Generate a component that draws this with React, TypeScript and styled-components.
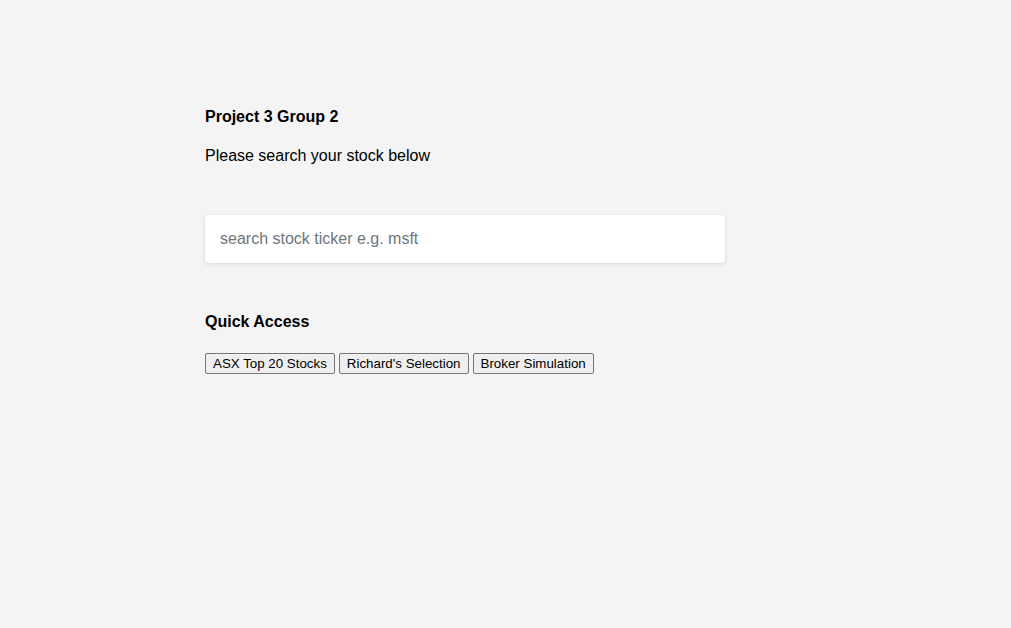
import React from "react";
import styled, { createGlobalStyle } from "styled-components";

const Global = createGlobalStyle`
  html, body { margin: 0; padding: 0; background: #f4f4f4; }
  body { font-family: "Liberation Sans", Arial, sans-serif; color: #000; }
`;

const Page = styled.main`
  display: flex;
  flex-direction: column;
  align-items: flex-start;
  padding: 108px 0 0 205px;
`;

const Title = styled.h1`
  margin: 0;
  font-size: 16px;
  font-weight: 700;
  line-height: 18px;
`;

const Lead = styled.p`
  margin: 21px 0 0;
  font-size: 16px;
  line-height: 18px;
`;

const SearchInput = styled.input`
  box-sizing: border-box;
  margin-top: 50px;
  width: 520px;
  height: 48px;
  padding: 0 15px;
  border: none;
  border-radius: 4px;
  background: #fff;
  box-shadow: 0 1px 4px rgba(0, 0, 0, 0.12);
  font-family: "Liberation Sans", Arial, sans-serif;
  font-size: 16px;
  color: #333;
  outline: none;
  &::placeholder { color: #6f757c; }
`;

const SectionTitle = styled.h2`
  margin: 50px 0 0;
  font-size: 16px;
  font-weight: 700;
  line-height: 18px;
`;

const ButtonRow = styled.div`
  display: flex;
  gap: 4px;
  margin-top: 22px;
`;

const QuickButton = styled.button`
  box-sizing: border-box;
  height: 21px;
  padding: 1px 7px;
  font-family: "Liberation Sans", Arial, sans-serif;
  font-size: 13.333px;
  color: #000;
  background: #efefef;
  border: 1px solid #767676;
  border-radius: 2px;
  cursor: pointer;
`;

export default function App() {
  return (
    <>
      <Global />
      <Page>
        <Title>Project 3 Group 2</Title>
        <Lead>Please search your stock below</Lead>
        <SearchInput placeholder="search stock ticker e.g. msft" />
        <SectionTitle>Quick Access</SectionTitle>
        <ButtonRow>
          <QuickButton>ASX Top 20 Stocks</QuickButton>
          <QuickButton>Richard's Selection</QuickButton>
          <QuickButton>Broker Simulation</QuickButton>
        </ButtonRow>
      </Page>
    </>
  );
}
